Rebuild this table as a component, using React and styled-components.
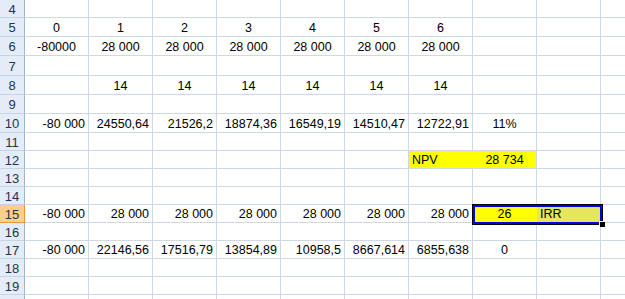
import styled, { createGlobalStyle } from "styled-components";

const GlobalStyle = createGlobalStyle`
  html, body {
    margin: 0;
    padding: 0;
    background: #ffffff;
  }
  body {
    font-family: "Liberation Sans", Arial, sans-serif;
  }
`;

const ROW_HEIGHTS = [18, 19, 19, 20, 19, 19, 19, 18, 18, 18, 18, 18, 18, 18, 18, 18, 18];

const Sheet = styled.div`
  display: grid;
  grid-template-columns: 25px repeat(10, 64px);
  grid-template-rows: ${ROW_HEIGHTS.map((h) => `${h}px`).join(" ")};
  width: 625px;
  height: 299px;
  overflow: hidden;
  font-size: 12.5px;
  color: #000;
`;

const RowHead = styled.div`
  grid-row: ${({ $r }) => $r};
  grid-column: 1;
  box-sizing: border-box;
  display: flex;
  align-items: center;
  justify-content: center;
  background: ${({ $active }) => ($active ? "#f8d08a" : "#e4ecf7")};
  border-right: 1px solid ${({ $active }) => ($active ? "#f29436" : "#9eb6ce")};
  border-bottom: 1px solid ${({ $active }) => ($active ? "#f29436" : "#c8d4e3")};
  color: #1f3450;
  font-size: 13px;
  padding-top: 1px;
`;

const Cell = styled.div`
  grid-row: ${({ $r }) => $r};
  grid-column: ${({ $c }) => $c};
  box-sizing: border-box;
  display: flex;
  align-items: center;
  justify-content: ${({ $align }) =>
    $align === "right" ? "flex-end" : $align === "left" ? "flex-start" : "center"};
  padding: 1px 3px 0 3px;
  white-space: nowrap;
  background: ${({ $bg }) => $bg || "transparent"};
  border-right: 1px solid ${({ $bg, $joinRight }) => ($bg && $joinRight ? $bg : "#d0d7e5")};
  border-bottom: 1px solid #d0d7e5;
`;

const Selection = styled.div`
  grid-row: ${({ $row }) => $row};
  grid-column: ${({ $col }) => $col};
  position: relative;
  pointer-events: none;

  &::before {
    content: "";
    position: absolute;
    top: -1px;
    left: -1px;
    right: -2px;
    bottom: -2px;
    border: 1px solid #000;
    box-shadow: inset 0 0 0 2px #0000e0;
  }

  &::after {
    content: "";
    position: absolute;
    right: -4px;
    bottom: -4px;
    width: 5px;
    height: 5px;
    background: #000;
    border-left: 1px solid #fff;
    border-top: 1px solid #fff;
  }
`;

const YELLOW = "#ffff00";
const SEL_YELLOW = "#e6e65c";

const c = (v, align = "center", extra = {}) => ({ v, align, ...extra });

const ROWS = [
  { n: 4, cells: [] },
  { n: 5, cells: [c("0"), c("1"), c("2"), c("3"), c("4"), c("5"), c("6")] },
  {
    n: 6,
    cells: [c("-80000"), c("28 000"), c("28 000"), c("28 000"), c("28 000"), c("28 000"), c("28 000")],
  },
  { n: 7, cells: [] },
  { n: 8, cells: [c(""), c("14"), c("14"), c("14"), c("14"), c("14"), c("14")] },
  { n: 9, cells: [] },
  {
    n: 10,
    cells: [
      c("-80 000", "right"),
      c("24550,64", "right"),
      c("21526,2", "right"),
      c("18874,36", "right"),
      c("16549,19", "right"),
      c("14510,47", "right"),
      c("12722,91", "right"),
      c("11%"),
    ],
  },
  { n: 11, cells: [] },
  {
    n: 12,
    cells: [
      c(""), c(""), c(""), c(""), c(""), c(""),
      c("NPV", "left", { bg: YELLOW, join: true }),
      c("28 734", "center", { bg: YELLOW }),
    ],
  },
  { n: 13, cells: [] },
  { n: 14, cells: [] },
  {
    n: 15,
    active: true,
    cells: [
      c("-80 000", "right"),
      c("28 000", "right"),
      c("28 000", "right"),
      c("28 000", "right"),
      c("28 000", "right"),
      c("28 000", "right"),
      c("28 000", "right"),
      c("26", "center", { bg: YELLOW, join: true }),
      c("IRR", "left", { bg: SEL_YELLOW }),
    ],
  },
  { n: 16, cells: [] },
  {
    n: 17,
    cells: [
      c("-80 000", "right"),
      c("22146,56", "right"),
      c("17516,79", "right"),
      c("13854,89", "right"),
      c("10958,5", "right"),
      c("8667,614", "right"),
      c("6855,638", "right"),
      c("0"),
    ],
  },
  { n: 18, cells: [] },
  { n: 19, cells: [] },
  // row 20 only peeks in at the bottom edge, its number is out of view
  { n: "", cells: [] },
];

const COLS = 10;

export default function App() {
  return (
    <>
      <GlobalStyle />
      <Sheet>
        {ROWS.map((row, r) => [
          <RowHead key={`h${r}`} $r={r + 1} $active={row.active}>
            {row.n}
          </RowHead>,
          ...Array.from({ length: COLS }, (_, i) => {
            const cell = row.cells[i] || { v: "" };
            return (
              <Cell
                key={`${r}-${i}`}
                $r={r + 1}
                $c={i + 2}
                $align={cell.align}
                $bg={cell.bg}
                $joinRight={cell.join}
              >
                {cell.v}
              </Cell>
            );
          }),
        ])}
        <Selection $row="12" $col="9 / 11" />
      </Sheet>
    </>
  );
}
